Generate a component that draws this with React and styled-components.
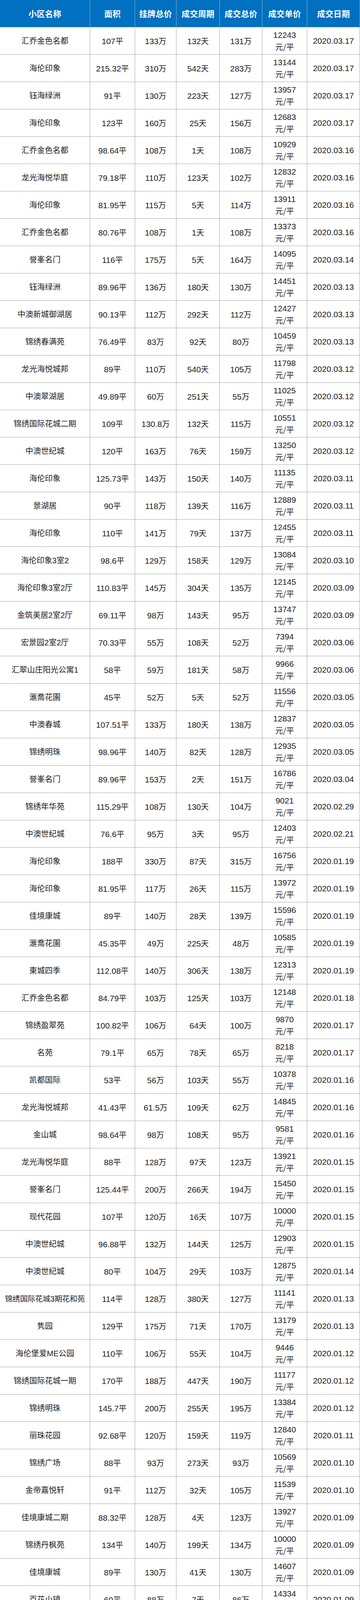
import React from "react";
import styled, { createGlobalStyle } from "styled-components";

const GlobalStyle = createGlobalStyle`
  html, body {
    margin: 0;
    padding: 0;
    background: #ffffff;
  }
  body {
    font-family: "Liberation Sans", "Noto Sans CJK SC", sans-serif;
  }
`;

const RAW = `汇乔金色名都|107|133|132|131|12243|2020.03.17
海伦印象|215.32|310|542|283|13144|2020.03.17
钰海绿洲|91|130|223|127|13957|2020.03.17
海伦印象|123|160|25|156|12683|2020.03.17
汇乔金色名都|98.64|108|1|108|10929|2020.03.16
龙光海悦华庭|79.18|110|123|102|12832|2020.03.16
海伦印象|81.95|115|5|114|13911|2020.03.16
汇乔金色名都|80.76|108|1|108|13373|2020.03.16
誉峯名门|116|175|5|164|14095|2020.03.14
钰海绿洲|89.96|136|180|130|14451|2020.03.13
中澳新城御湖居|90.13|112|292|112|12427|2020.03.13
锦绣春满苑|76.49|83|92|80|10459|2020.03.13
龙光海悦城邦|89|110|540|105|11798|2020.03.12
中澳翠湖居|49.89|60|251|55|11025|2020.03.12
锦绣国际花城二期|109|130.8|132|115|10551|2020.03.12
中澳世纪城|120|163|76|159|13250|2020.03.12
海伦印象|125.73|143|150|140|11135|2020.03.11
景湖居|90|118|139|116|12889|2020.03.11
海伦印象|110|141|79|137|12455|2020.03.11
海伦印象3室2|98.6|129|158|129|13084|2020.03.10
海伦印象3室2厅|110.83|145|304|135|12145|2020.03.09
金筑美居2室2厅|69.11|98|143|95|13747|2020.03.09
宏景园2室2厅|70.33|55|108|52|7394|2020.03.06
汇翠山庄阳光公寓1|58|59|181|58|9966|2020.03.06
滙喬花園|45|52|5|52|11556|2020.03.05
中澳春城|107.51|133|180|138|12837|2020.03.05
锦绣明珠|98.96|140|82|128|12935|2020.03.05
誉峯名门|89.96|153|2|151|16786|2020.03.04
锦绣年华苑|115.29|108|130|104|9021|2020.02.29
中澳世纪城|76.6|95|3|95|12403|2020.02.21
海伦印象|188|330|87|315|16756|2020.01.19
海伦印象|81.95|117|26|115|13972|2020.01.19
佳境康城|89|140|28|139|15596|2020.01.19
滙喬花園|45.35|49|225|48|10585|2020.01.19
東城四季|112.08|140|306|138|12313|2020.01.19
汇乔金色名都|84.79|103|125|103|12148|2020.01.18
锦绣盈翠苑|100.82|106|64|100|9870|2020.01.17
名苑|79.1|65|78|65|8218|2020.01.17
凯都国际|53|56|103|55|10378|2020.01.16
龙光海悦城邦|41.43|61.5|109|62|14845|2020.01.16
金山城|98.64|98|108|95|9581|2020.01.16
龙光海悦华庭|88|128|97|123|13921|2020.01.15
誉峯名门|125.44|200|266|194|15450|2020.01.15
现代花园|107|120|16|107|10000|2020.01.15
中澳世纪城|96.88|132|144|125|12903|2020.01.15
中澳世纪城|80|104|29|103|12875|2020.01.14
锦绣国际花城3期花和苑|114|128|380|127|11141|2020.01.13
隽园|129|175|71|170|13179|2020.01.13
海伦堡爱ME公园|110|106|55|104|9446|2020.01.12
锦绣国际花城一期|170|188|447|190|11177|2020.01.12
锦绣明珠|145.7|200|255|195|13384|2020.01.12
丽珠花园|92.68|120|159|119|12840|2020.01.11
锦绣广场|88|93|273|93|10569|2020.01.10
金帝嘉悦轩|91|112|32|105|11539|2020.01.10
佳境康城二期|88.32|128|4|123|13927|2020.01.09
锦绣丹枫苑|134|140|199|134|10000|2020.01.09
佳境康城|89|130|41|130|14607|2020.01.09
百花小镇|60|88|7|86|14334|2020.01.09
州际新天|78|95|33|90|11539|2020.01.09
中澳新城郦湖居|80.19|105|39|103|12795|2020.01.08
七星奥林园|69|98|211|94|13551|2020.01.08
御城金湾|135.82|150|251|147|10824|2020.01.08
锦绣乐满苑|100.3|92|308|88|8774|2020.01.08
优越家园|97.55|137|37|134|13686|2020.01.07
隽园3|93|132|106|130|13979|2020.01.07
佳境康城二期|89.41|145|59|142|15882|2020.01.07
佳境康城3室|106|145|32|135|12689|2020.01.07
锦绣国际花城二期|82.3|91|408|88|10693|2020.01.07
锦绣盈翠苑|78|79|155|78|10000|2020.01.07
优越家园|103|149|272|142|13787|2020.01.06
中澳世纪城|91|137|10|136|14891|2020.01.05
锦绣国际花城二期2室|82.3|91|408|88|10693|2020.01.07
锦绣盈翠苑|78|79|155|78|10000|2020.01.07
优越家园3|103|149|272|142|13787|2020.01.06
中澳世纪城|91|137|10|136|14891|2020.01.05
州际新天|102.13|116|8|114|11163|2020.01.05
中澳翠湖居|127.74|138|9|136|10647|2020.01.05
优越家园|122.8|153|114|157|12786|2020.01.05
清晖園|64.31|73|67|71|11038|2020.01.05
滙喬花園|85.36|85|86|85|9958|2020.01.05
中澳春城|137|188|225|178|12993|2020.01.04
中澳翠湖居|142|170|9|167|11761|2020.01.04
金筑美居|70|95|129|94|13329|2020.01.04
优越家园|122.92|188|1|188|15295|2020.01.04
汇翠山庄水晶园|134.62|190|138|188|13966|2020.01.03
锦绣丹枫苑|91.5|130|218|102|11148|2020.01.03
東城四季|156.89|163|32|163|10390|2020.01.02
汇乔金色名都|80|90|161|90|11250|2020.01.02
锦绣国际花城3期花和苑|126.7|155|152|143|11287|2020.01.01
锦绣明珠|113.5|175|61|170|14943|2020.01.01`;

const rows = RAW.split("\n").map((line) => {
  const [name, area, list, days, deal, unit, date] = line.split("|");
  return { name, area, list, days, deal, unit, date };
});

const TITLES = ["小区名称", "面积", "挂牌总价", "成交周期", "成交总价", "成交单价", "成交日期"];
const GRID = "231px 115px 106px 111px 109px 115px 135px";

const Sheet = styled.div`
  width: 922px;
  background: #ffffff;
`;

const Row = styled.div`
  display: grid;
  grid-template-columns: ${GRID};
  height: 70px;
  background: ${(p) => (p.$head ? "#0070c0" : "#ffffff")};
`;

const HeadCell = styled.div`
  display: flex;
  align-items: center;
  justify-content: center;
  box-sizing: border-box;
  height: 70px;
  padding-bottom: 1px;
  border-right: 1px solid #8fb6de;
  border-bottom: 1px solid #a6a6a6;
  color: #ffffff;
  font-family: "Noto Sans CJK SC", sans-serif;
  font-size: 21px;
  font-weight: 700;
  white-space: nowrap;
  &:last-child {
    border-right-color: #a6a6a6;
  }
`;

const Cell = styled.div`
  display: flex;
  flex-direction: column;
  align-items: center;
  justify-content: center;
  box-sizing: border-box;
  height: 70px;
  padding-top: 1px;
  border-right: 1px solid #a6a6a6;
  border-bottom: 1px solid #a6a6a6;
  color: #1b1b1b;
  white-space: nowrap;
  overflow: hidden;
`;

const Line = styled.div`
  display: flex;
  align-items: baseline;
  height: 30px;
  line-height: 30px;
`;

const Num = styled.span`
  font-family: "Liberation Sans", sans-serif;
  font-size: 21px;
`;

const Unit = styled.span`
  font-family: "Noto Sans CJK SC", sans-serif;
  font-size: 20px;
`;

const Name = styled.span`
  font-family: "Liberation Sans", "Noto Sans CJK SC", sans-serif;
  font-size: ${(p) => (p.$long ? "19.4px" : "20px")};
  line-height: 30px;
`;

function Value({ n, u }) {
  return (
    <Line>
      <Num>{n}</Num>
      {u ? <Unit>{u}</Unit> : null}
    </Line>
  );
}

function DataRow({ r }) {
  return (
    <Row>
      <Cell>
        <Name $long={r.name.length > 10}>{r.name}</Name>
      </Cell>
      <Cell>
        <Value n={r.area} u="平" />
      </Cell>
      <Cell>
        <Value n={r.list} u="万" />
      </Cell>
      <Cell>
        <Value n={r.days} u="天" />
      </Cell>
      <Cell>
        <Value n={r.deal} u="万" />
      </Cell>
      <Cell>
        <Value n={r.unit} />
        <Line>
          <Unit>元/平</Unit>
        </Line>
      </Cell>
      <Cell>
        <Value n={r.date} />
      </Cell>
    </Row>
  );
}

export default function App() {
  return (
    <Sheet>
      <GlobalStyle />
      <Row $head>
        {TITLES.map((t) => (
          <HeadCell key={t}>{t}</HeadCell>
        ))}
      </Row>
      {rows.map((r, i) => (
        <DataRow key={i} r={r} />
      ))}
    </Sheet>
  );
}
